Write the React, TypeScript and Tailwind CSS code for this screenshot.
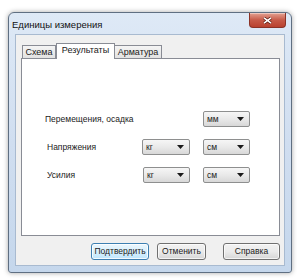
import React from 'react'

const font = { fontFamily: '"Liberation Sans", Arial, sans-serif' }

function Combo({ value }: { value: string }) {
  return (
    <div className="flex h-[16px] items-center justify-between rounded-[2px] border border-[#8e8f8f] bg-gradient-to-b from-[#f6f6f6] via-[#e9e9e9] to-[#d8d8d8] pl-[3px] pr-[5px] text-[8.5px] text-[#222]">
      <span>{value}</span>
      <svg width="7" height="4" viewBox="0 0 7 4">
        <path d="M0 0H7L3.5 4Z" fill="#1a1a1a" />
      </svg>
    </div>
  )
}

function Btn({ label, width, primary }: { label: string; width: string; primary?: boolean }) {
  return (
    <div
      className={
        'flex h-[17px] items-center justify-center whitespace-nowrap rounded-[3px] border text-[8.5px] text-[#1a1a1a] ' +
        width +
        (primary
          ? ' border-[#3c7fb1] bg-gradient-to-b from-[#eaf6fd] via-[#d9f0fc] to-[#bee6fd] shadow-[inset_0_0_0_1px_rgba(255,255,255,0.8)]'
          : ' border-[#707070] bg-gradient-to-b from-[#f2f2f2] via-[#ebebeb] to-[#d6d6d6] shadow-[inset_0_0_0_1px_rgba(255,255,255,0.7)]')
      }
    >
      {label}
    </div>
  )
}

export default function App() {
  return (
    <div className="h-[278px] w-[297px] bg-white pl-[8px] pt-[12px]" style={font}>
      <div className="flex h-[261px] w-[284px] flex-col rounded-t-[6px] rounded-b-[3px] border border-[#5f6f82] bg-gradient-to-b from-[#dee9f6] via-[#d0def0] to-[#c5d7ec] shadow-[0_0_5px_rgba(0,0,0,0.35)]">
        {/* title bar */}
        <div className="flex h-[21px] items-start justify-between">
          <span className="whitespace-nowrap pl-[3px] pt-[6px] text-[9.5px] leading-[11px] text-[#111]">Единицы измерения</span>
          <div className="mr-[5px] flex h-[15px] w-[37px] items-center justify-center rounded-b-[4px] border border-t-0 border-[#8b3226] bg-gradient-to-b from-[#e3a293] via-[#c75a48] to-[#b9412f] shadow-[inset_0_1px_0_rgba(255,255,255,0.4)]">
            <svg width="9" height="7" viewBox="0 0 9 7">
              <path d="M1 0.8L8 6.2M8 0.8L1 6.2" stroke="#5a1a10" strokeWidth="3" />
              <path d="M1 0.8L8 6.2M8 0.8L1 6.2" stroke="#ffffff" strokeWidth="1.6" />
            </svg>
          </div>
        </div>

        {/* client area */}
        <div className="mx-[6px] flex h-[232px] flex-col border border-[#a8bad0] bg-[#f0f0f0]">
          <div className="ml-[5px] mr-[4px] pt-[8px]">
            {/* tabs */}
            <div className="flex h-[15px] items-end pl-[1px] text-[9px] text-[#1a1a1a]">
              <div className="flex h-[13px] w-[34px] items-center justify-center border border-b-0 border-[#898c95] bg-gradient-to-b from-[#f4f4f4] to-[#e2e2e2] pt-[1px]">
                Схема
              </div>
              <div className="relative z-10 -mb-px flex h-[16px] w-[59px] items-center justify-center border border-b-0 border-[#898c95] bg-white pb-[1px]">
                Результаты
              </div>
              <div className="flex h-[13px] w-[47px] items-center justify-center border border-b-0 border-l-0 border-[#898c95] bg-gradient-to-b from-[#f4f4f4] to-[#e2e2e2] pt-[1px]">
                Арматура
              </div>
            </div>

            {/* panel */}
            <div className="h-[178px] border border-[#898c95] bg-white pl-[23px] pt-[52px]">
              <div className="grid grid-cols-[84px_48px_47px] grid-rows-[16px_16px_16px] gap-x-[13px] gap-y-[12px] text-[8.5px] text-[#1a1a1a]">
                <div className="flex items-center whitespace-nowrap">Перемещения, осадка</div>
                <div />
                <Combo value="мм" />

                <div className="flex items-center pl-[2px]">Напряжения</div>
                <Combo value="кг" />
                <Combo value="см" />

                <div className="flex items-center pl-[2px]">Усилия</div>
                <div className="ml-[1px]">
                  <Combo value="кг" />
                </div>
                <Combo value="см" />
              </div>
            </div>

            {/* buttons */}
            <div className="mt-[7px] flex justify-end">
              <Btn label="Подтвердить" width="w-[58px]" primary />
              <div className="w-[8px]" />
              <Btn label="Отменить" width="w-[49px]" />
              <div className="w-[17px]" />
              <Btn label="Справка" width="w-[57px]" />
            </div>
          </div>
        </div>
      </div>
    </div>
  )
}
